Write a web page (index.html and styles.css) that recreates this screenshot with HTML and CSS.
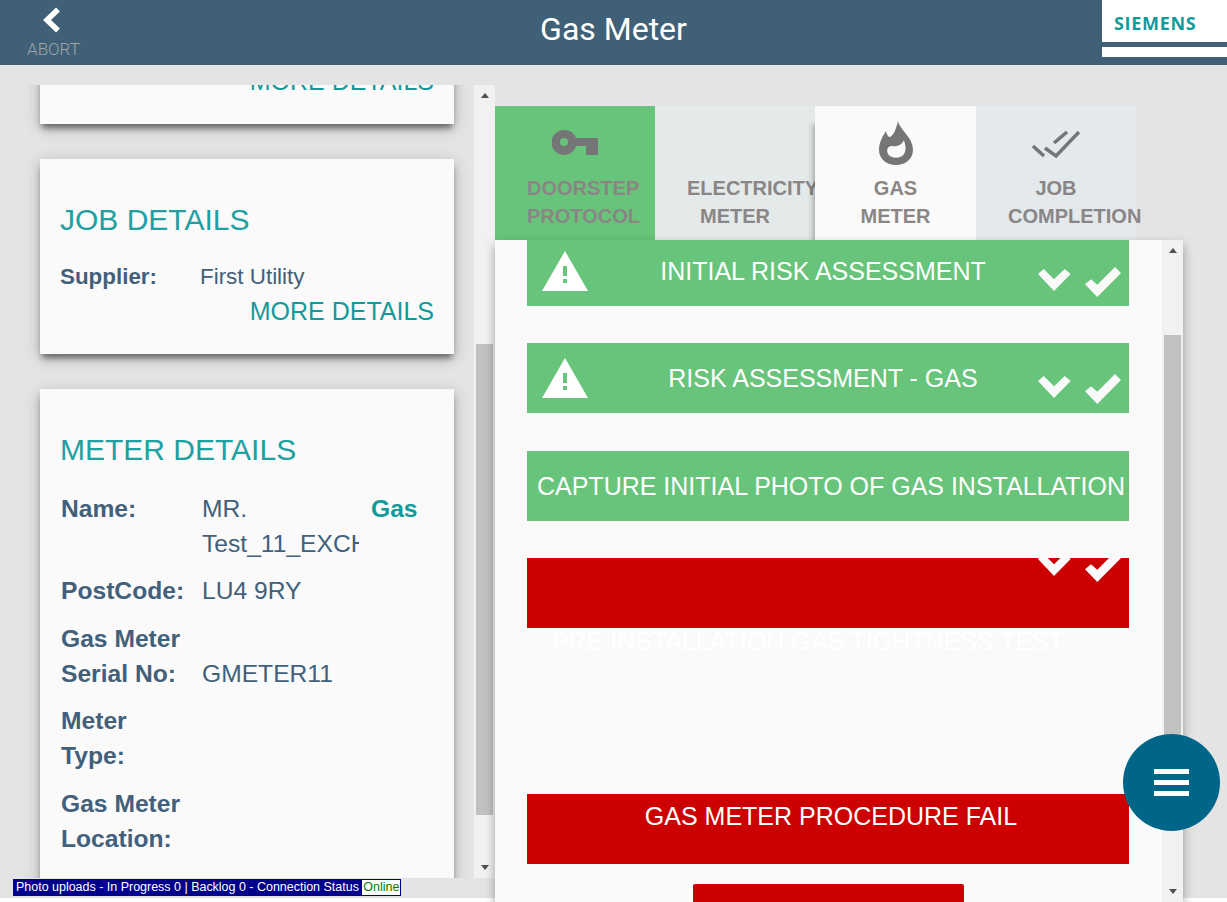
FILE: index.html
```html
<!DOCTYPE html>
<html>
<head>
    <title>Gas Meter</title>
    <meta name="viewport" content="width=device-width, initial-scale=1.0">
    <link rel="stylesheet" href="styles.css">
</head>
<body>
    <div class="page">
        <header class="topbar">
            <div class="abort">
                <svg class="abort-icon" viewBox="0 0 18 26"><polyline points="15,2.5 4,13 15,23.5" fill="none" stroke="#fff" stroke-width="5.5"/></svg>
                <span>ABORT</span>
            </div>
            <div class="topbar-title">Gas Meter</div>
            <div class="logo"><span class="logo-name">SIEMENS</span><span class="logo-line"></span></div>
        </header>

        <main class="content">
            <section class="side">
                <div class="side-scroll">
                    <div class="card card-cut">
                        <a class="more">MORE DETAILS</a>
                    </div>
                    <div class="card">
                        <h2>JOB DETAILS</h2>
                        <div class="job-row"><b>Supplier:</b><span>First Utility</span></div>
                        <a class="more">MORE DETAILS</a>
                    </div>
                    <div class="card">
                        <h2>METER DETAILS</h2>
                        <div class="meter-row meter-row-first">
                            <b class="meter-label">Name:</b>
                            <span class="meter-value">MR.<br>Test_11_EXCHANGE</span>
                            <b class="meter-fuel">Gas</b>
                        </div>
                        <div class="meter-row"><b class="meter-label">PostCode:</b><span class="meter-value">LU4 9RY</span></div>
                        <div class="meter-row meter-row-end"><b class="meter-label">Gas Meter Serial No:</b><span class="meter-value">GMETER11</span></div>
                        <div class="meter-row"><b class="meter-label">Meter Type:</b><span class="meter-value"></span></div>
                        <div class="meter-row"><b class="meter-label">Gas Meter Location:</b><span class="meter-value"></span></div>
                    </div>
                </div>
                <div class="scrollbar">
                    <div class="arrow arrow-up"></div>
                    <div class="track"><div class="thumb thumb-side"></div></div>
                    <div class="arrow arrow-down"></div>
                </div>
            </section>

            <section class="work">
                <nav class="tabs">
                    <div class="tab tab-done">
                        <div class="tab-icon">
                            <svg width="46" height="26" viewBox="0 0 46 26"><path fill="#757575" fill-rule="evenodd" d="M12.5 0A12.5 12.5 0 0 1 24 8H46V25H34V16H24A12.5 12.5 0 1 1 12.5 0ZM12 8A4 4 0 1 0 12 16A4 4 0 1 0 12 8Z"/></svg>
                        </div>
                        <div class="tab-label">DOORSTEP PROTOCOL</div>
                    </div>
                    <div class="tab tab-elec">
                        <div class="tab-icon"></div>
                        <div class="tab-label">ELECTRICITY METER</div>
                    </div>
                    <div class="tab tab-active">
                        <div class="tab-icon">
                            <svg width="34" height="44" viewBox="0 0 34 44"><path fill="#757575" fill-rule="evenodd" d="M19 0C20 8 34 16 34 29C34 38 26 44 17 44C8 44 0 38 0 29C0 21 4 15 7 10C8 14 9 16 11 16C15 14 17 8 19 0ZM25 19C23 24 18 26 13 25C9 25 7 28 9 33C12 38 22 38 25 33C28 28 26 24 25 19Z"/></svg>
                        </div>
                        <div class="tab-label">GAS METER</div>
                    </div>
                    <div class="tab tab-job">
                        <div class="tab-icon">
                            <svg class="icon-low" width="48" height="28" viewBox="0 0 48 28"><path fill="none" stroke="#757575" stroke-width="3.5" d="M1 15L12 25M13 17L24 25L47 1M22 12L35 1"/></svg>
                        </div>
                        <div class="tab-label">JOB COMPLETION</div>
                    </div>
                </nav>

                <div class="panel">
                    <div class="panel-scroll">
                        <div class="task task-green task-first">
                            <svg class="task-warn" viewBox="0 0 46 40"><path fill="#fff" fill-rule="evenodd" d="M23 0L46 40H0ZM21 15V25H25V15ZM21 28V32H25V28Z"/></svg>
                            <div class="task-title task-title-warn">INITIAL RISK ASSESSMENT</div>
                            <div class="task-marks">
                                <svg class="mark-open" width="33" height="22" viewBox="0 0 33 22"><polygon fill="#fafafa" points="0,5 5.7,0 16,10.3 26.7,0 32.7,5 16,22"/></svg>
                                <svg width="36" height="30" viewBox="0 0 36 30"><polygon fill="#fafafa" points="0,17.3 6,12.3 12.3,17.7 30,0 36,6 12.3,30"/></svg>
                            </div>
                        </div>
                        <div class="task task-green">
                            <svg class="task-warn" viewBox="0 0 46 40"><path fill="#fff" fill-rule="evenodd" d="M23 0L46 40H0ZM21 15V25H25V15ZM21 28V32H25V28Z"/></svg>
                            <div class="task-title task-title-warn">RISK ASSESSMENT - GAS</div>
                            <div class="task-marks">
                                <svg class="mark-open" width="33" height="22" viewBox="0 0 33 22"><polygon fill="#fafafa" points="0,5 5.7,0 16,10.3 26.7,0 32.7,5 16,22"/></svg>
                                <svg width="36" height="30" viewBox="0 0 36 30"><polygon fill="#fafafa" points="0,17.3 6,12.3 12.3,17.7 30,0 36,6 12.3,30"/></svg>
                            </div>
                        </div>
                        <div class="task task-green">
                            <div class="task-title task-title-wide">CAPTURE INITIAL PHOTO OF GAS INSTALLATION</div>
                        </div>
                        <div class="task task-red task-tall">
                            <div class="task-title task-title-low">PRE INSTALLATION GAS TIGHTNESS TEST</div>
                            <div class="task-marks task-marks-up">
                                <svg class="mark-open" width="33" height="22" viewBox="0 0 33 22"><polygon fill="#fafafa" points="0,5 5.7,0 16,10.3 26.7,0 32.7,5 16,22"/></svg>
                                <svg width="36" height="30" viewBox="0 0 36 30"><polygon fill="#fafafa" points="0,17.3 6,12.3 12.3,17.7 30,0 36,6 12.3,30"/></svg>
                            </div>
                        </div>
                        <div class="task task-red">
                            <div class="task-title task-title-top">GAS METER PROCEDURE FAIL</div>
                        </div>
                        <div class="panel-button"></div>
                    </div>
                    <div class="scrollbar">
                        <div class="arrow arrow-up"></div>
                        <div class="track"><div class="thumb thumb-panel"></div></div>
                        <div class="arrow arrow-down"></div>
                    </div>
                </div>
            </section>
        </main>

        <div class="status">Photo uploads - In Progress 0 | Backlog 0 - Connection Status <span class="status-online">Online</span></div>
        <button class="fab"><span></span><span></span><span></span></button>
    </div>
</body>
</html>
```

FILE: styles.css
```css
body {
    margin: 0;
    height: 902px;
    overflow: hidden;
    background: white;
    font-family: "Liberation Sans", Arial, sans-serif;
}
.page {
    position: relative;
    height: 898px;
    background-color: #e4e4e4;
}

/* top bar */
.topbar {
    height: 65px;
    display: grid;
    grid-template-columns: 1fr auto 1fr;
    background-color: #3f6077;
}
.abort {
    padding: 7px 0 0 27px;
    color: #a0a5a5;
    font-family: Roboto, sans-serif;
    font-weight: 300;
    font-size: 17px;
    line-height: 20px;
}
.abort-icon {
    display: block;
    width: 18px;
    height: 26px;
    margin: 0 0 6px 16px;
}
.topbar-title {
    color: white;
    font-family: Roboto, sans-serif;
    font-size: 32px;
    line-height: 59px;
}
.logo {
    justify-self: end;
    width: 125px;
    height: 57px;
    background: white;
}
.logo-name {
    display: block;
    padding: 11px 0 0 12px;
    height: 31px;
    box-sizing: border-box;
    color: #0f9b9b;
    font-family: "Open Sans", sans-serif;
    font-weight: 700;
    font-size: 18px;
    letter-spacing: 0.7px;
    line-height: 24px;
}
.logo-line {
    display: block;
    margin-top: 11px;
    height: 5px;
    background-color: #3f6077;
}

.content {
    display: flex;
    height: 833px;
}

/* left column */
.side {
    display: flex;
    width: 495px;
    height: 793px;
    margin-top: 20px;
}
.side-scroll {
    width: 474px;
    overflow: hidden;
}
.card {
    margin: 0 20px 35px 40px;
    padding: 43px 20px 26px;
    background-color: #fafafa;
    box-shadow: 0 6px 6px -2px rgba(0,0,0,0.45), 0 4px 14px rgba(0,0,0,0.25);
}
.card-cut {
    margin-top: -85px;
    padding-top: 64px;
}
.card h2 {
    margin: 0 0 22px;
    color: #20a0a0;
    font-size: 30px;
    font-weight: normal;
    line-height: 36px;
}
.more {
    display: block;
    text-align: right;
    color: #119a9a;
    font-size: 25px;
    line-height: 34px;
}
.job-row {
    display: flex;
    color: #42607a;
    font-size: 22.4px;
    line-height: 34px;
}
.job-row b {
    width: 140px;
}
.meter-row {
    display: flex;
    margin: 0 0 12.4px 1px;
    color: #42607a;
    font-size: 24.64px;
    line-height: 35px;
}
.meter-row-first {
    margin-top: 23px;
}
.meter-label {
    width: 125px;
    margin-right: 16px;
    flex: none;
}
.meter-row-end {
    align-items: flex-end;
}
.meter-value {
    width: 157px;
    overflow: hidden;
    white-space: nowrap;
}
.meter-fuel {
    margin-left: 12px;
    color: #119a9a;
}

/* scrollbars */
.scrollbar {
    width: 21px;
    flex: none;
    display: flex;
    flex-direction: column;
    background-color: #f1f1f1;
}
.track {
    flex: 1;
}
.thumb {
    width: 17px;
    margin-left: 2px;
    background-color: #c1c1c1;
}
.thumb-side {
    height: 471px;
    margin-top: 238px;
}
.thumb-panel {
    height: 475px;
    margin-top: 74px;
}
.arrow {
    height: 21px;
    flex: none;
    display: flex;
    align-items: center;
    justify-content: center;
}
.arrow::before {
    content: "";
    border-left: 4.5px solid transparent;
    border-right: 4.5px solid transparent;
}
.arrow-up::before {
    border-bottom: 5px solid #505050;
}
.arrow-down::before {
    border-top: 5px solid #505050;
}

/* right column: tabs */
.work {
    width: 688px;
    padding-top: 41px;
}
.tabs {
    display: flex;
    width: 641px;
    height: 134px;
}
.tab {
    width: 160px;
    flex: none;
    box-sizing: border-box;
    padding: 0 32px;
    color: #8a8686;
    font-size: 20px;
    font-weight: bold;
    line-height: 28px;
    text-align: center;
}
.tab-icon {
    height: 68px;
    display: flex;
    align-items: center;
    justify-content: center;
    padding-top: 6px;
    box-sizing: border-box;
}
.icon-low {
    margin-top: 4px;
}
.tab-done { background-color: #68c47a; }
.tab-elec { background-color: #e4eaea; }
.tab-active {
    width: 161px;
    background-color: #fafafa;
    box-shadow: -2px 18px 6px rgba(0,0,0,0.3);
}
.tab-job {
    background-color: #e4e9ec;
}

/* right column: task list */
.panel {
    position: relative;
    display: flex;
    height: 662px;
    background-color: #fafafa;
    box-shadow: 0 5px 10px rgba(0,0,0,0.35);
}
.panel-scroll {
    width: 667px;
    height: 662px;
    overflow: hidden;
}
.task {
    position: relative;
    height: 70px;
    margin: 0 33px 37.4px 32px;
    color: white;
    font-size: 25px;
    line-height: 30px;
    text-align: center;
}
.task-first {
    margin-top: -4px;
}
.task-green { background-color: #68c47a; }
.task-red { background-color: #cc0000; }
.task-tall { margin-bottom: 166px; }
.task-warn {
    position: absolute;
    left: 15px;
    top: 15px;
    width: 46px;
    height: 40px;
}
.task-marks {
    position: absolute;
    right: 8px;
    top: 31px;
    display: flex;
    gap: 14px;
}
.task-marks-up {
    top: -6px;
}
.mark-open {
    margin-top: 2px;
}
.task-title {
    padding-top: 20px;
}
.task-title-warn { padding-right: 10px; }
.task-title-wide { padding-left: 6px; white-space: nowrap; }
.task-title-low {
    padding: 68px 40px 0 0;
    color: #fff;
}
.task-title-top { padding: 7px 0 0 6px; }
.panel-button {
    width: 271px;
    height: 40px;
    margin: -17.5px 0 0 198px;
    background-color: #cc0000;
    border-radius: 2px;
}

/* overlays */
.status {
    position: absolute;
    left: 13px;
    top: 879px;
    width: 388px;
    height: 17px;
    box-sizing: border-box;
    padding-left: 3px;
    background-color: #00008b;
    color: white;
    font-size: 12.48px;
    line-height: 15px;
    white-space: nowrap;
}
.status-online {
    display: inline-block;
    margin-top: 1px;
    padding: 0 1px;
    background-color: white;
    color: green;
}
.fab {
    position: absolute;
    left: 1123.4px;
    top: 733.5px;
    width: 97px;
    height: 97px;
    padding: 0;
    border: none;
    border-radius: 50%;
    background-color: #006689;
    display: flex;
    flex-direction: column;
    align-items: center;
    justify-content: center;
    gap: 6px;
}
.fab span {
    width: 35px;
    height: 5px;
    background-color: white;
}
```
